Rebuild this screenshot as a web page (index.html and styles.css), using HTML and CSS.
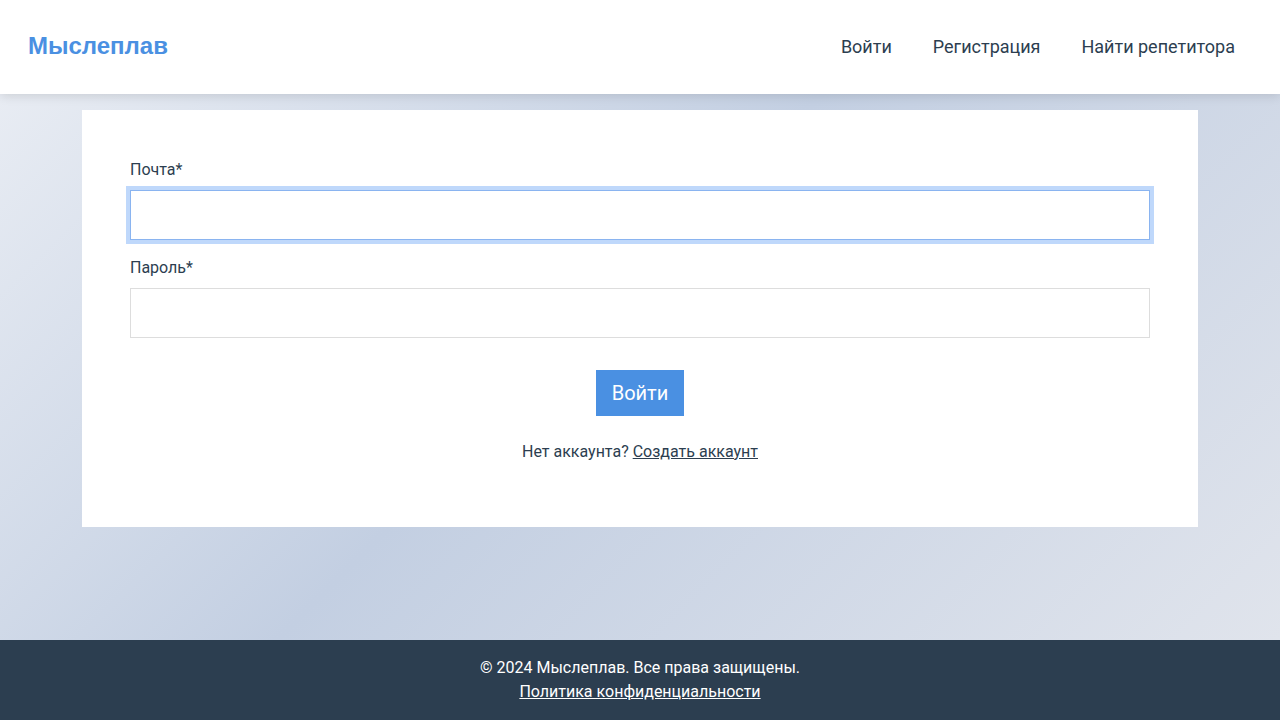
FILE: index.html
```html
<!DOCTYPE html>
<html lang="ru">
<head>
<meta charset="utf-8">
<title>Мыслеплав — Вход</title>
<link rel="stylesheet" href="styles.css">
</head>
<body>
<header class="site-header">
  <a class="logo" href="#">Мыслеплав</a>
  <nav class="nav">
    <a href="#">Войти</a>
    <a href="#">Регистрация</a>
    <a href="#">Найти репетитора</a>
  </nav>
</header>
<main class="main">
  <section class="card">
    <form class="form">
      <div class="form-group">
        <label for="email">Почта*</label>
        <input id="email" class="field is-focused" type="email">
      </div>
      <div class="form-group">
        <label for="password">Пароль*</label>
        <input id="password" class="field" type="password">
      </div>
      <div class="actions">
        <button type="button" class="btn">Войти</button>
      </div>
      <p class="switch">Нет аккаунта? <a href="#">Создать аккаунт</a></p>
    </form>
  </section>
</main>
<footer class="site-footer">
  <p>© 2024 Мыслеплав. Все права защищены.</p>
  <a href="#">Политика конфиденциальности</a>
</footer>
</body>
</html>
```

FILE: styles.css
```css
* { box-sizing: border-box; }
html, body { margin: 0; padding: 0; }
body {
  font-family: Roboto, "Liberation Sans", Arial, sans-serif;
  color: #2c3e50;
  min-height: 100vh;
  display: flex;
  flex-direction: column;
  background: #fff;
}
.site-header {
  height: 94px;
  background: #fff;
  display: flex;
  align-items: center;
  justify-content: space-between;
  padding: 0 45px 2px 28px;
  box-shadow: 0 2px 10px rgba(0, 0, 0, 0.12);
  position: relative;
  z-index: 2;
}
.logo {
  font-family: "Liberation Sans", Arial, sans-serif;
  font-weight: 700;
  font-size: 24px;
  color: #4a90e2;
  text-decoration: none;
}
.nav {
  display: flex;
  gap: 41px;
}
.nav a {
  font-size: 18px;
  color: #2c3e50;
  text-decoration: none;
}
.main {
  flex: 1;
  padding: 16px 0;
  background: linear-gradient(135deg, #e8ecf3 0%, #c3cfe2 45%, #e0e4ec 100%);
}
.card {
  width: 1116px;
  margin: 0 auto;
  background: #fff;
  padding: 48px 48px 47px;
}
.form-group {
  margin-bottom: 16px;
}
.form-group label {
  display: block;
  font-size: 16px;
  line-height: 24px;
  margin-bottom: 8px;
  color: #2c3e50;
}
.field {
  display: block;
  width: 100%;
  height: 50px;
  border: 1px solid #ddd;
  background: #fff;
  font: inherit;
  padding: 0 12px;
  outline: none;
}
.field.is-focused {
  border-color: #8ab4f0;
  box-shadow: 0 0 0 4px #bfd8fb;
}
.actions {
  display: flex;
  justify-content: center;
  margin-top: 32px;
}
.btn {
  font-family: Roboto, "Liberation Sans", Arial, sans-serif;
  font-size: 20px;
  line-height: 24px;
  padding: 11px 16px;
  background: #4a90e2;
  color: #fff;
  border: none;
  cursor: pointer;
}
.switch {
  margin: 24px 0 16px;
  text-align: center;
  font-size: 16px;
  line-height: 24px;
}
.switch a {
  color: #2c3e50;
  text-decoration: underline;
}
.site-footer {
  height: 80px;
  background: #2c3e50;
  color: #fff;
  text-align: center;
  padding: 16px 0;
  font-size: 16px;
  line-height: 24px;
}
.site-footer p { margin: 0; }
.site-footer a { color: #fff; text-decoration: underline; }
```
